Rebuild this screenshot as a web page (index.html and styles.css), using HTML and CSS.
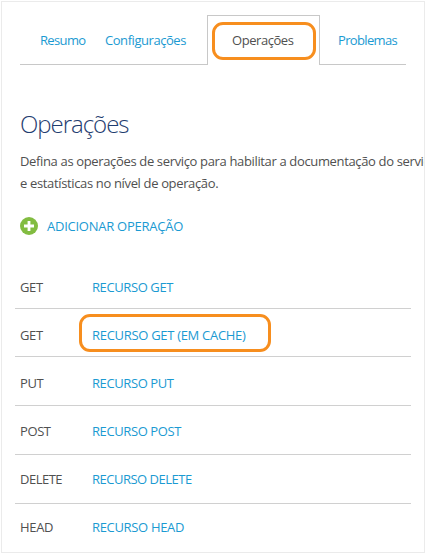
FILE: index.html
```html
<!DOCTYPE html>
<html lang="pt-BR">
<head>
<meta charset="utf-8">
<title>Operações</title>
<link rel="stylesheet" href="styles.css">
</head>
<body>
<main class="panel">
  <nav class="tabs">
    <a class="tab tab-summary">Resumo</a>
    <a class="tab tab-settings">Configurações</a>
    <a class="tab tab-active"><span class="highlight">Operações</span></a>
    <a class="tab tab-issues">Problemas</a>
  </nav>
  <h1 class="title">Operações</h1>
  <p class="intro">Defina as operações de serviço para habilitar a documentação do serviç<br>e estatísticas no nível de operação.</p>
  <a class="add">
    <svg class="add-icon" viewBox="0 0 18 18"><circle cx="9" cy="9" r="9"/><path d="M9 4v10M4 9h10"/></svg>
    <span>ADICIONAR OPERAÇÃO</span>
  </a>
  <ul class="operations">
    <li class="operation"><span>GET</span><a class="resource">RECURSO GET</a></li>
    <li class="operation"><span>GET</span><a class="resource resource-marked">RECURSO GET (EM CACHE)</a></li>
    <li class="operation"><span>PUT</span><a class="resource">RECURSO PUT</a></li>
    <li class="operation"><span>POST</span><a class="resource">RECURSO POST</a></li>
    <li class="operation"><span>DELETE</span><a class="resource">RECURSO DELETE</a></li>
    <li class="operation"><span>HEAD</span><a class="resource">RECURSO HEAD</a></li>
  </ul>
</main>
</body>
</html>
```
FILE: styles.css
```css
* { box-sizing: border-box; }
body {
  margin: 0;
  padding: 1px;
  background: #fff;
  color: #505050;
  font: 13px/18px "Open Sans", "Noto Sans", sans-serif;
  letter-spacing: -0.4px;
}
a { color: #1b9ad2; }
.panel {
  width: 424px;
  height: 552px;
  padding: 13px 13px 0;
  border: 1px solid #ebebeb;
  overflow: hidden;
}
.tabs {
  display: grid;
  grid-template-columns: 85px 102px 113px 86px;
  height: 50px;
  margin-left: 5px;
  letter-spacing: -0.45px;
}
.tab {
  padding-top: 16px;
  border-bottom: 1px solid #c8c8c8;
  white-space: nowrap;
}
.tab-summary { padding-left: 20px; letter-spacing: -0.65px; }
.tab-issues { padding-left: 18px; letter-spacing: -0.65px; }
.tab-active {
  padding: 6px 0 0 4px;
  border: 1px solid #c8c8c8;
  border-bottom: 0;
  color: #505050;
}
.highlight {
  display: block;
  width: 104px;
  height: 38px;
  padding: 6px 0 0 17px;
  border: 3px solid #f78e1e;
  border-radius: 11px;
}
.title {
  margin: 42px 0 0 5px;
  color: #1f3d70;
  font-size: 24px;
  font-weight: 300;
  line-height: 34px;
  letter-spacing: -1.03px;
}
.intro {
  margin: 9px 0 0 5px;
  line-height: 22px;
  letter-spacing: -0.35px;
  white-space: nowrap;
}
.add {
  display: flex;
  align-items: center;
  gap: 9px;
  height: 18px;
  margin: 23px 0 0 5px;
  letter-spacing: -0.25px;
}
.add-icon { width: 18px; height: 18px; fill: #82bc41; stroke: none; }
.add-icon path { stroke: #fff; stroke-width: 2.8; }
.operations {
  width: 396px;
  margin: 26px 0 0;
  padding: 0;
  list-style: none;
}
.operation {
  display: grid;
  grid-template-columns: 72px auto;
  justify-content: start;
  align-items: start;
  height: 49px;
  padding: 17px 0 0 5px;
  border-bottom: 1px solid #d0d0d0;
}
.operation:nth-child(-n+2) { height: 48px; }
.operation:nth-child(4) { padding-top: 16px; }
.operation:nth-child(5) { padding-top: 15px; letter-spacing: -0.5px; }
.operation:last-child { padding-top: 14px; border: 0; letter-spacing: -0.33px; }
.resource-marked {
  width: 192px;
  height: 38px;
  margin: -12px 0 0 -13px;
  padding: 9px 0 0 10px;
  border: 3px solid #f78e1e;
  border-radius: 11px;
  letter-spacing: -0.3px;
}
```
